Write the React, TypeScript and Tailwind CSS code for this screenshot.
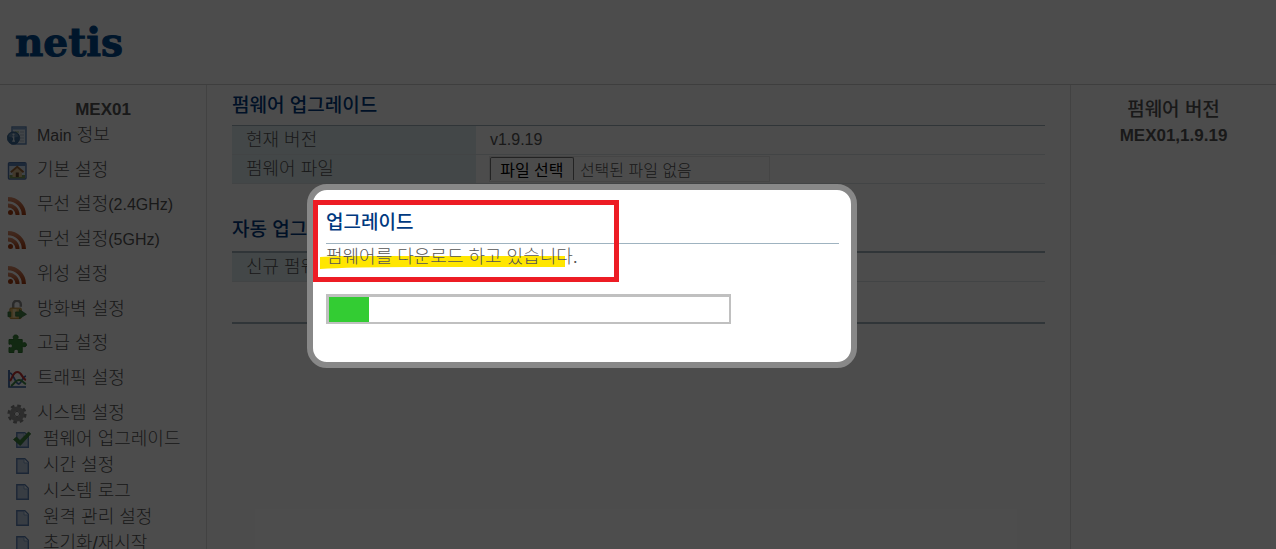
import React, { useRef } from 'react';

type IconProps = { className?: string };

const InfoIcon: React.FC<IconProps> = ({ className }) => (
    <svg viewBox="0 0 20 20" className={className}>
        <rect x="5" y="1" width="14" height="17" fill="#dbe6f0" stroke="#5b84b8" strokeWidth="1.4" />
        <rect x="5.5" y="1.5" width="13" height="2" fill="#7fa2cc" />
        <path d="M8 6h4M8 8.500h4" stroke="#8cab6a" strokeWidth="1.2" />
        <path d="M13 6h4M13 9h4M13 12h4M13 15h4" stroke="#a9b8c9" strokeWidth="1" />
        <circle cx="6.500" cy="12" r="6.300" fill="#3d6b98" stroke="#2f5c8a" strokeWidth="0.6" />
        <path d="M1.500 10.500a5.200 5.200 0 0 1 10 0q-5 2-10 0z" fill="#7fa3c4" opacity="0.6" />
        <circle cx="6.500" cy="8.600" r="1.100" fill="#d5e2ee" />
        <path d="M5.400 11h1.300v4M5.200 15.200h2.800" stroke="#d5e2ee" strokeWidth="1.300" fill="none" />
    </svg>
);

const HomeIcon: React.FC<IconProps> = ({ className }) => (
    <svg viewBox="0 0 20 20" className={className}>
        <rect x="1.500" y="1.700" width="17.500" height="16.300" rx="1" fill="#d5e3f2" stroke="#4f72a8" strokeWidth="1.400" />
        <rect x="2" y="2" width="16.500" height="3" fill="#5f87bd" />
        <rect x="2.500" y="14" width="15.500" height="3.300" fill="#7d9c58" />
        <path d="M5.500 10.500 10.200 7l4.700 3.500V16H5.500z" fill="#dcbf92" />
        <path d="m3.800 11.200 6.400-5.400 6.400 5.400" fill="none" stroke="#9c6636" strokeWidth="2" />
        <rect x="8.800" y="11.500" width="3" height="4.500" fill="#63452a" />
    </svg>
);

const RssIcon: React.FC<IconProps> = ({ className }) => (
    <svg viewBox="0 0 20 20" className={className}>
        <defs>
            <linearGradient id="rss" x1="0" y1="0" x2="0" y2="1">
                <stop offset="0" stopColor="#dc8f6c" />
                <stop offset="1" stopColor="#a83c10" />
            </linearGradient>
        </defs>
        <path d="M1 1a18 18 0 0 1 18 18h-4.200A13.800 13.800 0 0 0 1 5.200z" fill="url(#rss)" />
        <path d="M1 7.500A11.500 11.500 0 0 1 12.500 19H8.600A7.600 7.600 0 0 0 1 11.400z" fill="url(#rss)" />
        <circle cx="3.500" cy="16.500" r="2.500" fill="#a83c10" />
    </svg>
);

const LockIcon: React.FC<IconProps> = ({ className }) => (
    <svg viewBox="0 0 21 20" className={className}>
        <path d="M6.500 8V4.500a4 4 0 0 1 8-.500v2.500" fill="none" stroke="#8c8c8c" strokeWidth="2.600" />
        <rect x="3" y="8" width="12" height="11" rx="1" fill="#e0b866" stroke="#bb862f" />
        <rect x="6" y="9" width="4" height="9" fill="#f3dca4" />
        <path d="M1 12h3v5H1zM9 12h4V9.500l7.500 5-7.500 4.500v-2.500H9z" fill="#46864a" stroke="#316b36" strokeWidth="0.700" />
    </svg>
);

const PuzzleIcon: React.FC<IconProps> = ({ className }) => (
    <svg viewBox="0 0 20 20" className={className}>
        <path
            d="M2 5.500h5C5.500 3 6.300 1 8.700 1s3.200 2 1.700 4.500h4.800v3.700c2-1 4.300-.6 4.300 1.500s-2.300 2.500-4.300 1.500v6.300h-4c.7-2-.4-3.300-2.100-3.300S6.300 16.500 7 18.500H2v-5c2 .8 3.400.1 3.400-1.600S4 9.500 2 10.300z"
            fill="#3f8a3d"
            stroke="#2f7630"
        />
    </svg>
);

const TrafficIcon: React.FC<IconProps> = ({ className }) => (
    <svg viewBox="0 0 20 20" className={className}>
        <path d="M2 1v17h17" fill="none" stroke="#2f5c9c" strokeWidth="1.700" />
        <path d="M3 4c4 1 5 11 9 11 3-1 3-7 7-8" fill="none" stroke="#4068ac" strokeWidth="1.800" />
        <path d="M3 12C6 8 6 3 10.500 3S15 10 19 11" fill="none" stroke="#c43533" strokeWidth="2.200" />
        <path d="M4 17c4-2 4-6 8-6s4 3 7 4" fill="none" stroke="#428a4a" strokeWidth="2" />
    </svg>
);

const GearIcon: React.FC<IconProps> = ({ className }) => (
    <svg viewBox="0 0 20 20" className={className}>
        <circle cx="10" cy="10" r="8.200" fill="none" stroke="#858585" strokeWidth="2.800" strokeDasharray="3.600 2.840" />
        <circle cx="10" cy="10" r="5.200" fill="none" stroke="#979797" strokeWidth="4.600" />
        <circle cx="10" cy="10" r="2.600" fill="#f2f2f2" stroke="#7c7c7c" />
    </svg>
);

const PagePath = () => (
    <>
        <path d="M3.800 2.800h8l3.500 3.500v10.900H3.800z" fill="#bccde2" stroke="#5d7fb3" strokeWidth="1.400" />
        <path d="M11 3v4h4.200" fill="#e6eef7" stroke="#86a2c8" />
    </>
);

const PageIcon: React.FC<IconProps> = ({ className }) => (
    <svg viewBox="0 0 18 20" className={className}>
        <PagePath />
    </svg>
);

const CheckIcon: React.FC<IconProps> = ({ className }) => (
    <svg viewBox="0 0 18 20" className={className}>
        <PagePath />
        <path d="m.500 9.500 3-2.500L7 10.500 15.500 2l2.300 1.800L7.300 15.500z" fill="#3f843e" stroke="#2f7030" strokeWidth="0.700" />
    </svg>
);

const MENU = [
    { latin: 'Main', label: ' 정보', Icon: InfoIcon },
    { label: '기본 설정', Icon: HomeIcon },
    { label: '무선 설정', suffix: '(2.4GHz)', Icon: RssIcon },
    { label: '무선 설정', suffix: '(5GHz)', Icon: RssIcon },
    { label: '위성 설정', Icon: RssIcon },
    { label: '방화벽 설정', Icon: LockIcon },
    { label: '고급 설정', Icon: PuzzleIcon },
    { label: '트래픽 설정', Icon: TrafficIcon },
    { label: '시스템 설정', Icon: GearIcon },
];

const SUB_MENU = [
    { label: '펌웨어 업그레이드', Icon: CheckIcon },
    { label: '시간 설정', Icon: PageIcon },
    { label: '시스템 로그', Icon: PageIcon },
    { label: '원격 관리 설정', Icon: PageIcon },
    { label: '초기화/재시작', Icon: PageIcon },
];

const Sidebar: React.FC = () => (
    <nav className="w-[207px] shrink-0 border-r border-[#dcdcdc] pt-[13px]">
        <h2 className="text-center text-[17px] leading-6 font-bold">MEX01</h2>
        <ul className="-mt-1 grid h-[312px] auto-rows-fr">
            {MENU.map(({ latin, label, suffix, Icon }) => (
                <li key={label + suffix} className="flex items-center">
                    <a href="#" className="flex items-center gap-2.5 pl-[7px] whitespace-pre">
                        <Icon className="mt-0.5 size-5" />
                        <span>
                            {latin && <span className="text-base">{latin}</span>}
                            {label}
                            {suffix && <span className="text-base">{suffix}</span>}
                        </span>
                    </a>
                </li>
            ))}
        </ul>
        <ul className="-mt-1">
            {SUB_MENU.map(({ label, Icon }) => (
                <li key={label}>
                    <a href="#" className="flex h-[26px] items-center gap-3 pl-[13px]">
                        <Icon className="mt-0.5 h-5 w-[18px]" />
                        {label}
                    </a>
                </li>
            ))}
        </ul>
    </nav>
);

const FirmwareForm: React.FC = () => {
    const fileRef = useRef<HTMLInputElement>(null);

    return (
        <main className="min-w-0 flex-1 pt-[7px] pr-[25px] pl-[25px]">
            <h1 className="h-[33px] text-[19px] leading-7 font-medium text-[#00397f]">펌웨어 업그레이드</h1>
            <table className="w-full table-fixed border-collapse border-t border-[#a2b2bb]">
                <tbody>
                    <tr className="h-[29px] border-b border-[#dde3e6]">
                        <th className="w-[30%] bg-[#e0eef1] pl-3.5 text-left font-light">현재 버전</th>
                        <td className="pl-3.5 text-base">v1.9.19</td>
                    </tr>
                    <tr className="h-[29px] border-b border-[#dde3e6]">
                        <th className="bg-[#e0eef1] pl-3.5 text-left font-light">
                            <label htmlFor="firmware">펌웨어 파일</label>
                        </th>
                        <td className="pl-[13px] text-base">
                            <div className="flex h-[26px] w-[281px] items-start overflow-hidden border border-[#e6e6e6]">
                                <input id="firmware" ref={fileRef} type="file" className="hidden" />
                                <button
                                    type="button"
                                    onClick={() => fileRef.current?.click()}
                                    className="h-[23px] w-[84px] shrink-0 rounded-t-xs border border-b-0 border-[#767676] text-base leading-[26px] font-normal text-black"
                                >
                                    파일 선택
                                </button>
                                <span className="ml-1.5 leading-7 font-light">선택된 파일 없음</span>
                            </div>
                        </td>
                    </tr>
                </tbody>
            </table>
            <h1 className="mt-8 h-[35px] text-[19px] leading-7 font-medium text-[#00397f]">자동 업그레이드</h1>
            <table className="w-full table-fixed border-collapse border-t-2 border-[#a2b2bb]">
                <tbody>
                    <tr className="h-[29px] border-b border-[#dde3e6]">
                        <th className="w-[30%] bg-[#e0eef1] pl-3.5 text-left font-light">신규 펌웨어</th>
                        <td />
                    </tr>
                </tbody>
            </table>
            <div className="h-[42px] border-b-2 border-[#a2b2bb]" />
        </main>
    );
};

const UpgradeDialog: React.FC<{ percent: number }> = ({ percent }) => (
    <section
        role="dialog"
        aria-labelledby="dialog-title"
        className="absolute top-[184px] left-[307px] h-[184px] w-[550px] rounded-[20px] border-6 border-[#888] bg-white pt-[19px] pr-3 pl-[13px]"
    >
        <h2 id="dialog-title" className="h-[35px] border-b border-[#9fb3c0] text-[19px] leading-7 font-medium text-[#00397f]">
            업그레이드
        </h2>
        <p className="relative leading-[26px]">
            {/* Marker stroke */}
            <svg viewBox="0 0 245 14" className="absolute top-[11px] -left-1.5 h-3.5 w-[245px]">
                <path d="M0 2 18 1 245 1V12L90 12Q30 12 0 14z" fill="#ffe600" />
            </svg>
            <span className="relative">펌웨어를 다운로드 하고 있습니다.</span>
        </p>
        <div
            role="progressbar"
            aria-valuenow={percent}
            className="mt-6 h-[30px] w-[405px] border-t-3 border-r-2 border-b-2 border-l-3 border-[#c0c0c0]"
        >
            <div className="h-full bg-[#33cc33]" style={{ width: `${percent}%` }} />
        </div>
        {/* Red frame around the status message */}
        <div className="pointer-events-none absolute top-[10px] left-0 h-[82px] w-[306px] border-5 border-[#ed1c24]" />
    </section>
);

export default function App() {
    return (
        <div className="relative flex h-screen flex-col overflow-hidden bg-white font-['Liberation_Sans','Noto_Sans_CJK_KR',sans-serif] text-lg leading-6 font-light text-[#555]">
            <header className="flex h-[85px] shrink-0 items-center border-b border-[#d0d0d0] pl-[15px]">
                <a
                    href="#"
                    className="font-['DejaVu_Serif',serif] text-[39px] leading-none font-bold text-[#004a90] [-webkit-text-stroke:1px_#004a90]"
                >
                    netis
                </a>
            </header>
            <div className="flex flex-1">
                <Sidebar />
                <FirmwareForm />
                <aside className="w-[206px] shrink-0 border-l border-[#dcdcdc] pt-3 text-center text-[17px] leading-[26px] font-bold">
                    <p className="text-[19px] font-medium">펌웨어 버전</p>
                    <p>MEX01,1.9.19</p>
                </aside>
            </div>
            <div className="absolute inset-0 bg-black/70" />
            <UpgradeDialog percent={10} />
        </div>
    );
}
